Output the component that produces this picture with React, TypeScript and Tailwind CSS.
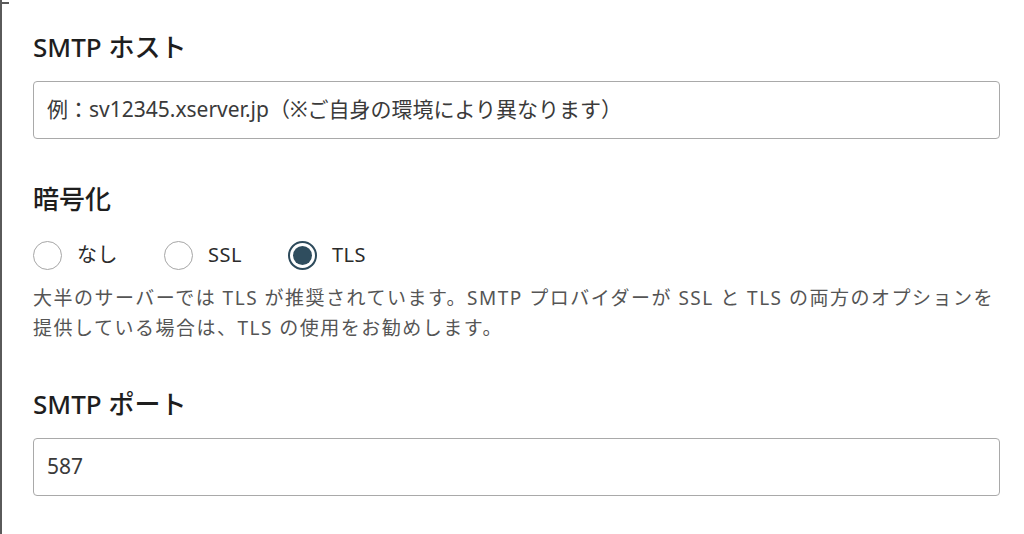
const font = { fontFamily: '"Noto Sans", "Noto Sans CJK JP", sans-serif' };

type RadioProps = {
  label: string;
  checked?: boolean;
};

const Radio = ({ label, checked }: RadioProps) => (
  <label className="flex items-center gap-[15px]">
    {checked ? (
      <span className="w-[29px] h-[29px] rounded-full border-2 border-[#2d4a5b] flex items-center justify-center">
        <span className="w-[19px] h-[19px] rounded-full bg-[#2f4d5e]"></span>
      </span>
    ) : (
      <span className="w-[29px] h-[29px] rounded-full border-[1.5px] border-[#a6a6a6] bg-white"></span>
    )}
    <span className="text-[20px] tracking-[0.5px] text-[#2b2b2b]">{label}</span>
  </label>
);

export default function App() {
  return (
    <div
      className="relative w-[1024px] h-[534px] bg-white border-l-2 border-[#5a5a5a] pl-[31px] pr-[24px] overflow-hidden"
      style={font}
    >
      <div className="absolute left-0 top-[2px] w-[7px] h-[2px] bg-[#5a5a5a]"></div>

      <div className="pt-[31px] text-[26px] leading-[32px] font-medium text-[#1e1e1e]">SMTP ホスト</div>
      <div className="mt-[18px] h-[58px] rounded-[4px] border-[1.5px] border-[#a9a9a9] flex items-center px-[13px] text-[21px] text-[#3a3a3a]">
        例：sv12345.xserver.jp（※ご自身の環境により異なります）
      </div>

      <div className="mt-[44px] text-[26px] leading-[32px] font-medium text-[#1e1e1e]">暗号化</div>
      <div className="mt-[25px] flex items-center gap-[46px] h-[30px]">
        <Radio label="なし" />
        <Radio label="SSL" />
        <Radio label="TLS" checked />
      </div>

      <p className="mt-[13px] text-[19px] leading-[30px] tracking-[1.5px] text-[#555555] whitespace-nowrap">
        大半のサーバーでは TLS が推奨されています。SMTP プロバイダーが SSL と TLS の両方のオプションを
        <br />
        提供している場合は、TLS の使用をお勧めします。
      </p>

      <div className="mt-[45px] text-[26px] leading-[32px] font-medium text-[#1e1e1e]">SMTP ポート</div>
      <div className="mt-[18px] h-[58px] rounded-[4px] border-[1.5px] border-[#a9a9a9] flex items-center px-[13px] text-[21px] text-[#3a3a3a]">
        587
      </div>
    </div>
  );
}
